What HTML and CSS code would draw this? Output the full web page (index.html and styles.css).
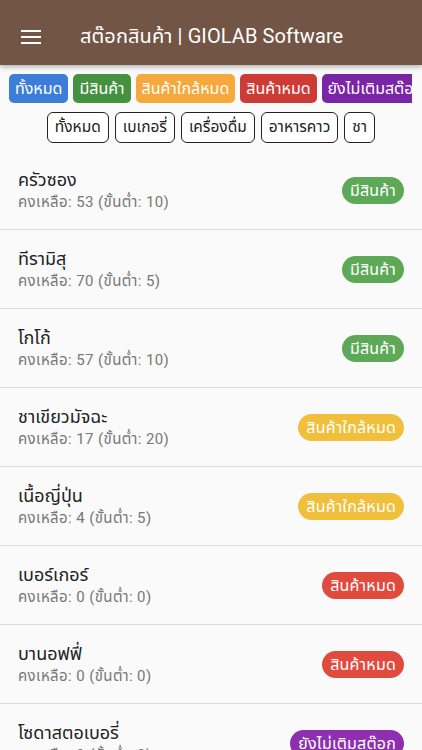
FILE: index.html
```html
<!DOCTYPE html>
<html lang="th">
  <head>
    <meta charset="UTF-8" />
    <meta name="viewport" content="width=device-width, initial-scale=1.0" />
    <title>สต๊อกสินค้า | GIOLAB Software</title>
    <link rel="stylesheet" href="styles.css">
  </head>
  <body>
    <header class="appbar">
      <button class="menu-button" aria-label="เมนู">
        <svg width="20" height="16" viewBox="0 0 20 16">
          <rect x="0" y="1" width="20" height="2" fill="#fff" />
          <rect x="0" y="7" width="20" height="2" fill="#fff" />
          <rect x="0" y="13" width="20" height="2" fill="#fff" />
        </svg>
      </button>
      <span class="appbar-title">สต๊อกสินค้า | GIOLAB Software</span>
    </header>

    <div class="status-filters">
      <span class="status-chip blue">ทั้งหมด</span>
      <span class="status-chip green">มีสินค้า</span>
      <span class="status-chip orange">สินค้าใกล้หมด</span>
      <span class="status-chip red">สินค้าหมด</span>
      <span class="status-chip purple">ยังไม่เติมสต๊อก</span>
    </div>

    <div class="category-filters">
      <span class="category-chip">ทั้งหมด</span>
      <span class="category-chip">เบเกอรี่</span>
      <span class="category-chip">เครื่องดื่ม</span>
      <span class="category-chip">อาหารคาว</span>
      <span class="category-chip">ชา</span>
    </div>

    <ul class="stock-list">
      <li class="stock-item">
        <div class="stock-info">
          <p class="stock-name">ครัวซอง</p>
          <p class="stock-qty">คงเหลือ: 53 (ขั้นต่ำ: 10)</p>
        </div>
        <span class="badge in-stock">มีสินค้า</span>
      </li>
      <li class="stock-item">
        <div class="stock-info">
          <p class="stock-name">ทีรามิสุ</p>
          <p class="stock-qty">คงเหลือ: 70 (ขั้นต่ำ: 5)</p>
        </div>
        <span class="badge in-stock">มีสินค้า</span>
      </li>
      <li class="stock-item">
        <div class="stock-info">
          <p class="stock-name">โกโก้</p>
          <p class="stock-qty">คงเหลือ: 57 (ขั้นต่ำ: 10)</p>
        </div>
        <span class="badge in-stock">มีสินค้า</span>
      </li>
      <li class="stock-item">
        <div class="stock-info">
          <p class="stock-name">ชาเขียวมัจฉะ</p>
          <p class="stock-qty">คงเหลือ: 17 (ขั้นต่ำ: 20)</p>
        </div>
        <span class="badge low">สินค้าใกล้หมด</span>
      </li>
      <li class="stock-item">
        <div class="stock-info">
          <p class="stock-name">เนื้อญี่ปุ่น</p>
          <p class="stock-qty">คงเหลือ: 4 (ขั้นต่ำ: 5)</p>
        </div>
        <span class="badge low">สินค้าใกล้หมด</span>
      </li>
      <li class="stock-item">
        <div class="stock-info">
          <p class="stock-name">เบอร์เกอร์</p>
          <p class="stock-qty">คงเหลือ: 0 (ขั้นต่ำ: 0)</p>
        </div>
        <span class="badge out">สินค้าหมด</span>
      </li>
      <li class="stock-item">
        <div class="stock-info">
          <p class="stock-name">บานอฟฟี่</p>
          <p class="stock-qty">คงเหลือ: 0 (ขั้นต่ำ: 0)</p>
        </div>
        <span class="badge out">สินค้าหมด</span>
      </li>
      <li class="stock-item">
        <div class="stock-info">
          <p class="stock-name">โซดาสตอเบอรี่</p>
          <p class="stock-qty">คงเหลือ: 0 (ขั้นต่ำ: 0)</p>
        </div>
        <span class="badge not-set">ยังไม่เติมสต๊อก</span>
      </li>
    </ul>
  </body>
</html>
```

FILE: styles.css
```css
* {
  box-sizing: border-box;
  margin: 0;
  padding: 0;
}

body {
  font-family: Roboto, "Noto Sans Thai", "Noto Sans", sans-serif;
  background: #fafafa;
  color: #222;
  overflow: hidden;
}

.appbar {
  height: 65px;
  background-color: #735546;
  color: white;
  display: flex;
  align-items: center;
  padding: 8px 0 0 21px;
  box-shadow: 0 2px 5px rgba(0, 0, 0, 0.3);
  position: relative;
  z-index: 10;
}

.menu-button {
  background: none;
  border: none;
  display: flex;
  padding: 0;
  margin-right: 39px;
}

.appbar-title {
  font-size: 20px;
  letter-spacing: 0.1px;
}

.status-filters {
  display: flex;
  gap: 5px;
  margin: 9px 10px 0 9px;
  overflow: hidden;
}

.status-chip {
  flex: none;
  height: 29px;
  line-height: 29px;
  padding: 0 6px;
  border-radius: 5px;
  color: white;
  font-size: 16px;
}

.blue { background: #3b7dd8; }
.green { background: #44913f; }
.orange { background: #f5a83c; }
.red { background: #cd3b36; }
.purple { background: #7a24a6; }

.category-filters {
  display: flex;
  justify-content: center;
  gap: 6px;
  margin-top: 9px;
}

.category-chip {
  height: 31px;
  line-height: 28px;
  padding: 0 7px;
  border: 1.5px solid #222;
  border-radius: 6px;
  background: white;
  font-size: 15.5px;
}

.stock-list {
  list-style: none;
  margin-top: 8px;
}

.stock-item {
  height: 79px;
  display: flex;
  align-items: center;
  justify-content: space-between;
  padding: 0 18px;
  border-bottom: 1px solid #dcdcdc;
}

.stock-name {
  font-size: 18px;
  color: #222;
  line-height: 23px;
}

.stock-qty {
  font-size: 15px;
  letter-spacing: 0.4px;
  color: #777;
  line-height: 22px;
}

.badge {
  height: 27px;
  line-height: 27px;
  padding: 0 8px;
  border-radius: 14px;
  color: white;
  font-size: 16px;
  letter-spacing: 0.2px;
}

.in-stock { background: #5ea957; }
.low { background: #f0bf3c; }
.out { background: #e04b3e; }
.not-set { background: #8e2fb0; }
```
